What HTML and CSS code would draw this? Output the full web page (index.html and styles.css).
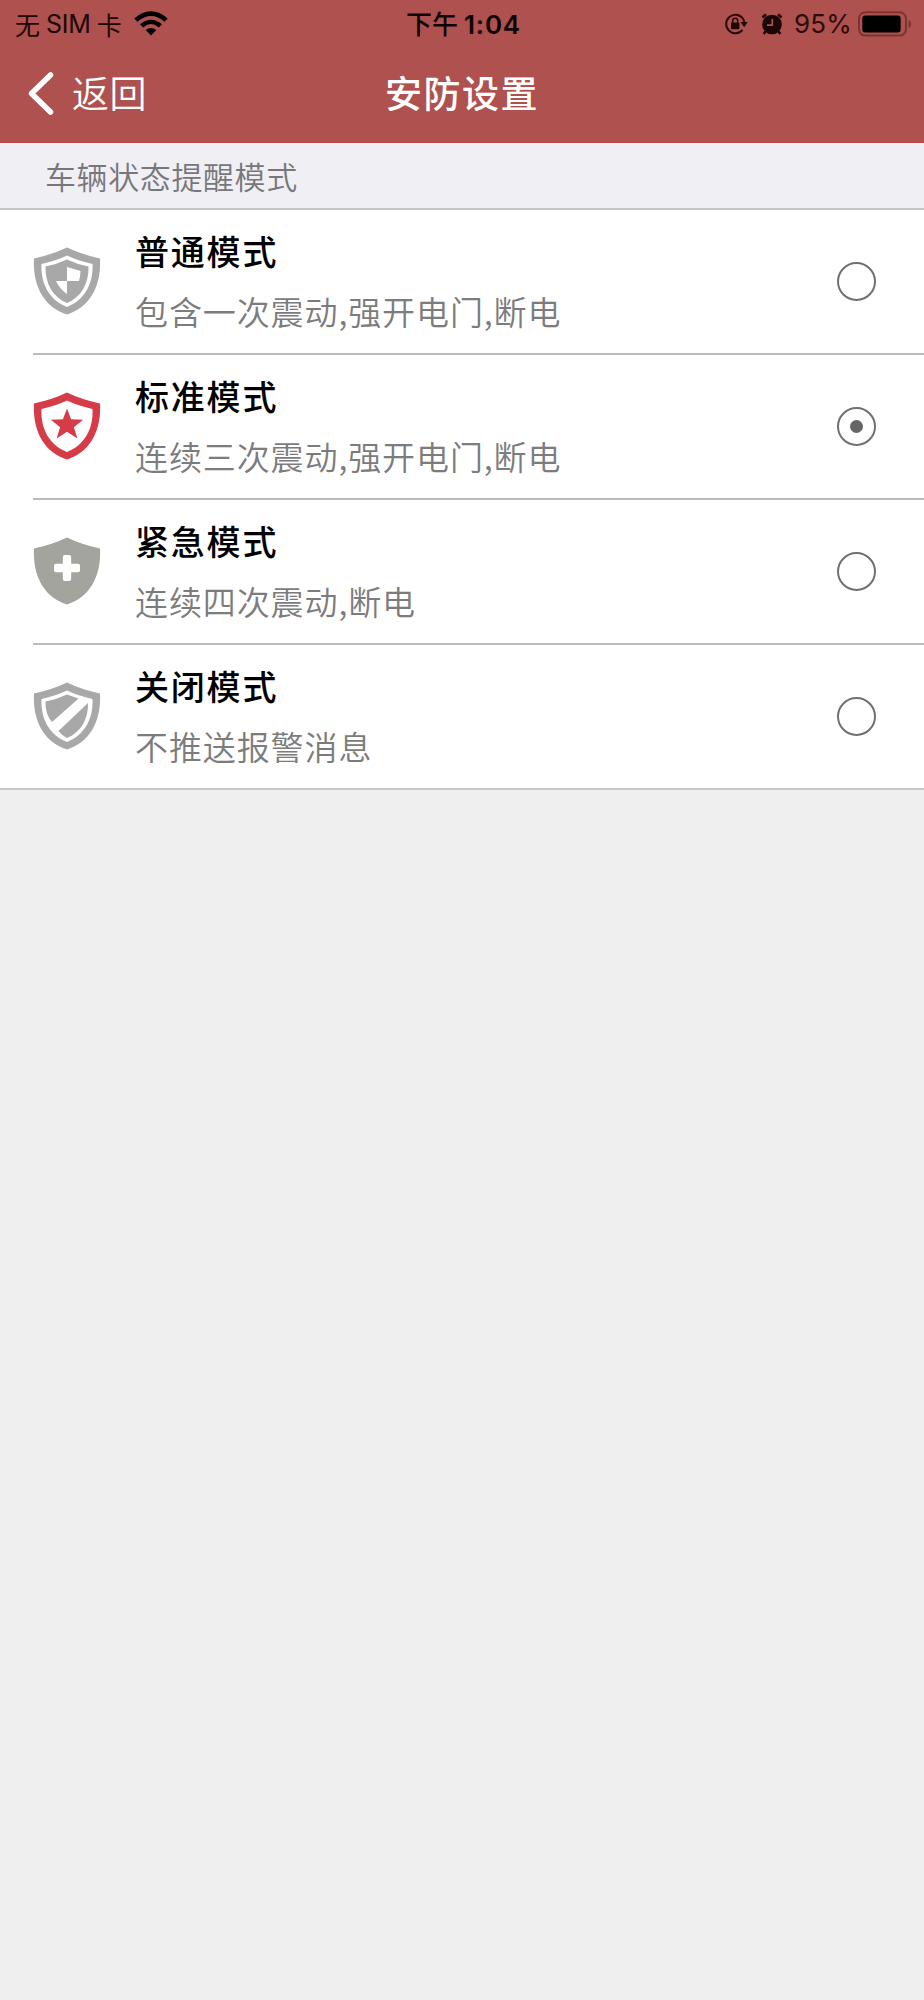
FILE: index.html
```html
<!DOCTYPE html>
<html lang="zh-CN">
<head>
  <meta charset="UTF-8" />
  <meta name="viewport" content="width=device-width, initial-scale=1.0"/>
  <title>安防设置</title>
  <link rel="stylesheet" href="styles.css">
</head>
<body>
  <header>
    <div class="status-bar">
      <div class="status-left">
        <span class="carrier"><span>无</span><span class="sim">SIM</span><span>卡</span></span>
        <svg class="wifi" width="34" height="25" viewBox="0 0 34 25">
          <path d="M0.3 7.4 Q17 -6.8 33.7 7.4 L30.6 10.7 Q17 -0.7 3.4 10.7 Z"/>
          <path d="M6 13.3 Q17 4 28 13.3 L24.8 16.4 Q17 9.8 9.2 16.4 Z"/>
          <path d="M11.7 19 Q17 14.8 22.3 19 L17 24.6 Z"/>
        </svg>
      </div>
      <div class="status-time">下午<span>1:04</span></div>
      <div class="status-right">
        <svg width="24" height="22" viewBox="0 0 24 22">
          <path class="line" d="M18.5 5.2 A9.2 9.2 0 1 0 18.5 16.8"/>
          <path class="line" d="M18.5 5.2 Q20.2 7.3 20.4 10"/>
          <path d="M16.6 9 H23.6 L20.2 14.2 Z"/>
          <rect x="7" y="9.5" width="8.4" height="6.8" rx="1"/>
          <path class="thin" d="M8.7 10 V7.8 A2.5 2.5 0 0 1 13.7 7.8 V10"/>
        </svg>
        <svg class="alarm" width="22" height="22" viewBox="0 0 22 22">
          <circle cx="11" cy="11.5" r="9.8"/>
          <path class="bell" d="M1.4 4.4 L5 1.4 M20.6 4.4 L17 1.4 M5 18 L2.6 20.8 M17 18 L19.4 20.8"/>
          <path class="hand" d="M11.3 6 V12.2 H6"/>
        </svg>
        <span class="percent">95%</span>
        <svg class="battery" width="54" height="26" viewBox="0 0 54 26">
          <rect class="shell" x="1" y="1.2" width="47" height="23.4" rx="6.5"/>
          <rect class="charge" x="4.3" y="4.6" width="38.4" height="16.8" rx="3"/>
          <path class="nub" d="M50.5 9 Q53.2 10 53.2 13 Q53.2 16 50.5 17 Z"/>
        </svg>
      </div>
    </div>
    <nav>
      <a class="back" href="#">
        <svg width="26" height="43" viewBox="0 0 26 43"><path d="M22.5 3 L3.5 21.5 L22.5 40"/></svg>
        <span>返回</span>
      </a>
      <h1>安防设置</h1>
    </nav>
  </header>

  <div class="section-title">车辆状态提醒模式</div>

  <div class="list" id="modeList">
    <label class="row">
      <svg class="shield gray" viewBox="0 0 67 68">
        <path d="M33.5 0.5 Q48 7.5 66.5 11.5 C68 38 57 60 33.5 67.5 C10 60 -1 38 0.5 11.5 Q19 7.5 33.5 0.5 Z"/>
        <path class="cut" d="M33.5 8.5 Q45 14 59 17 C60 37 51 53 33.5 60 C16 53 7 37 8 17 Q22 14 33.5 8.5 Z"/>
        <path d="M33.5 12.5 Q44 17.5 55 19.5 C55.5 36 48 50 33.5 56 C19 50 11.5 36 12 19.5 Q23 17.5 33.5 12.5 Z"/>
        <path class="cut" d="M33.5 20 L47 24 Q47 29 45.5 34 H33.5 V47 Q26 42 22.5 34 H33.5 Z"/>
      </svg>
      <div class="info">
        <div class="name">普通模式</div>
        <div class="desc">包含一次震动,强开电门,断电</div>
      </div>
      <input type="radio" name="mode">
    </label>

    <label class="row">
      <svg class="shield red" viewBox="0 0 67 68">
        <path d="M33.5 0.5 Q48 7.5 66.5 11.5 C68 38 57 60 33.5 67.5 C10 60 -1 38 0.5 11.5 Q19 7.5 33.5 0.5 Z"/>
        <path class="cut" d="M33.5 8.5 Q45 14 59 17 C60 37 51 53 33.5 60 C16 53 7 37 8 17 Q22 14 33.5 8.5 Z"/>
        <path d="M33.5 16.5 L37.6 27.2 L49.7 27.7 L40.4 35.2 L43.9 46.4 L33.5 39.8 L23.1 46.4 L26.6 35.2 L17.3 27.7 L29.4 27.2 Z"/>
      </svg>
      <div class="info">
        <div class="name">标准模式</div>
        <div class="desc">连续三次震动,强开电门,断电</div>
      </div>
      <input type="radio" name="mode" checked>
    </label>

    <label class="row">
      <svg class="shield olive" viewBox="0 0 67 68">
        <path d="M33.5 0.5 Q48 7.5 66.5 11.5 C68 38 57 60 33.5 67.5 C10 60 -1 38 0.5 11.5 Q19 7.5 33.5 0.5 Z"/>
        <rect class="cut" x="29.3" y="18" width="8.4" height="26" rx="2"/>
        <rect class="cut" x="20.5" y="26.8" width="26" height="8.4" rx="2"/>
      </svg>
      <div class="info">
        <div class="name">紧急模式</div>
        <div class="desc">连续四次震动,断电</div>
      </div>
      <input type="radio" name="mode">
    </label>

    <label class="row">
      <svg class="shield gray" viewBox="0 0 67 68">
        <path d="M33.5 0.5 Q48 7.5 66.5 11.5 C68 38 57 60 33.5 67.5 C10 60 -1 38 0.5 11.5 Q19 7.5 33.5 0.5 Z"/>
        <path class="cut" d="M33.5 8.5 Q45 14 59 17 C60 37 51 53 33.5 60 C16 53 7 37 8 17 Q22 14 33.5 8.5 Z"/>
        <path d="M33.5 12.5 L45 16.5 L18.5 40 Q11.5 32 12 19.5 Q23 17.5 33.5 12.5 Z"/>
        <path d="M54.5 21 C55 36 48 50 33.5 56 Q28.5 53.5 25 49 Z"/>
      </svg>
      <div class="info">
        <div class="name">关闭模式</div>
        <div class="desc">不推送报警消息</div>
      </div>
      <input type="radio" name="mode">
    </label>
  </div>
</body>
</html>
```
FILE: styles.css
```css
* {
  box-sizing: border-box;
}

body {
  margin: 0;
  min-height: 2000px;
  font-family: 'Noto Sans CJK SC', sans-serif;
  background: #efefef;
  color: #000;
}

header {
  height: 143px;
  background-color: #af514e;
  border-bottom: 1px solid #b9494b;
}

.status-bar {
  display: grid;
  grid-template-columns: 1fr auto 1fr;
  align-items: center;
  height: 46px;
  padding: 0 12px 0 15px;
  font-size: 25px;
  line-height: 46px;
  color: #1b0707;
}

.status-left,
.status-right {
  display: flex;
  align-items: center;
}

.status-right {
  justify-content: flex-end;
}

.carrier {
  display: flex;
}

.sim {
  margin: 0 6px 0 6px;
  font-family: Inter, sans-serif;
  letter-spacing: -0.2px;
}

.wifi {
  margin-left: 12px;
  margin-top: -2px;
  fill: #000;
}

.status-time {
  font-size: 26px;
  font-weight: 500;
  color: #0d0202;
}

.status-time span {
  margin-left: 6px;
  font-family: Inter, sans-serif;
  font-weight: 600;
  letter-spacing: 0.8px;
}

.alarm {
  margin-left: 13px;
}

.percent {
  margin-left: 11px;
  font-family: Inter, sans-serif;
  font-size: 26px;
  letter-spacing: 0.2px;
  color: #2c0c0c;
}

.battery {
  margin-left: 6px;
}

.status-right svg {
  fill: #1b0505;
}

.status-right .line {
  fill: none;
  stroke: #2a0a0a;
  stroke-width: 2;
}

.status-right .bell {
  fill: none;
  stroke: #1b0505;
  stroke-width: 2.6;
}

.status-right .thin {
  fill: none;
  stroke: #2a0a0a;
  stroke-width: 1.5;
}

.status-right .hand {
  fill: none;
  stroke: #af514e;
  stroke-width: 1.7;
}

.battery .shell {
  fill: none;
  stroke: #7b3432;
  stroke-width: 2;
}

.battery .charge {
  fill: #000;
}

.battery .nub {
  fill: #7b3432;
}

nav {
  display: grid;
  grid-template-columns: 1fr auto 1fr;
  align-items: center;
  height: 94px;
  color: #fff;
}

.back {
  display: flex;
  align-items: center;
  padding-left: 28px;
  font-size: 37px;
  font-weight: 350;
  letter-spacing: 0.5px;
  color: #fff;
  text-decoration: none;
}

.back svg {
  margin-right: 18px;
  fill: none;
  stroke: #fff;
  stroke-width: 5.5;
  stroke-linecap: round;
  stroke-linejoin: round;
}

.back span {
  margin-top: -2px;
}

h1 {
  margin: -2px 0 0;
  font-size: 37px;
  font-weight: 500;
  letter-spacing: 1.5px;
}

.section-title {
  height: 67px;
  padding-left: 45px;
  font-size: 31px;
  font-weight: 350;
  line-height: 65px;
  letter-spacing: 0.6px;
  color: #77777b;
  background: #efeff4;
  border-bottom: 2px solid #c8c8ca;
}

.list {
  background: #fff;
  border-bottom: 2px solid #c8c8c8;
}

.row {
  display: flex;
  align-items: center;
  height: 145px;
  margin-left: 33px;
  padding-right: 48px;
  border-bottom: 2px solid #bbb;
}

.row:last-child {
  height: 143px;
  border-bottom: none;
}

.shield {
  width: 68px;
  height: 68px;
  margin-top: -1px;
}

.gray {
  fill: #a8a8a8;
}

.red {
  fill: #d63c48;
}

.olive {
  fill: #a3a49e;
}

.shield .cut {
  fill: #fff;
}

.info {
  flex: 1;
  margin-top: -2px;
  margin-left: 34px;
}

.name {
  font-size: 34px;
  font-weight: 500;
  line-height: 60px;
  letter-spacing: 1.8px;
}

.desc {
  font-size: 33px;
  font-weight: 350;
  line-height: 60px;
  letter-spacing: 0.9px;
  color: #7c7c7c;
}

input[type="radio"] {
  appearance: none;
  display: grid;
  place-items: center;
  width: 39px;
  height: 39px;
  margin: 0;
  border: 2px solid #707070;
  border-radius: 50%;
}

input[type="radio"]:checked::before {
  content: "";
  width: 13px;
  height: 13px;
  border-radius: 50%;
  background: #666;
}
```
